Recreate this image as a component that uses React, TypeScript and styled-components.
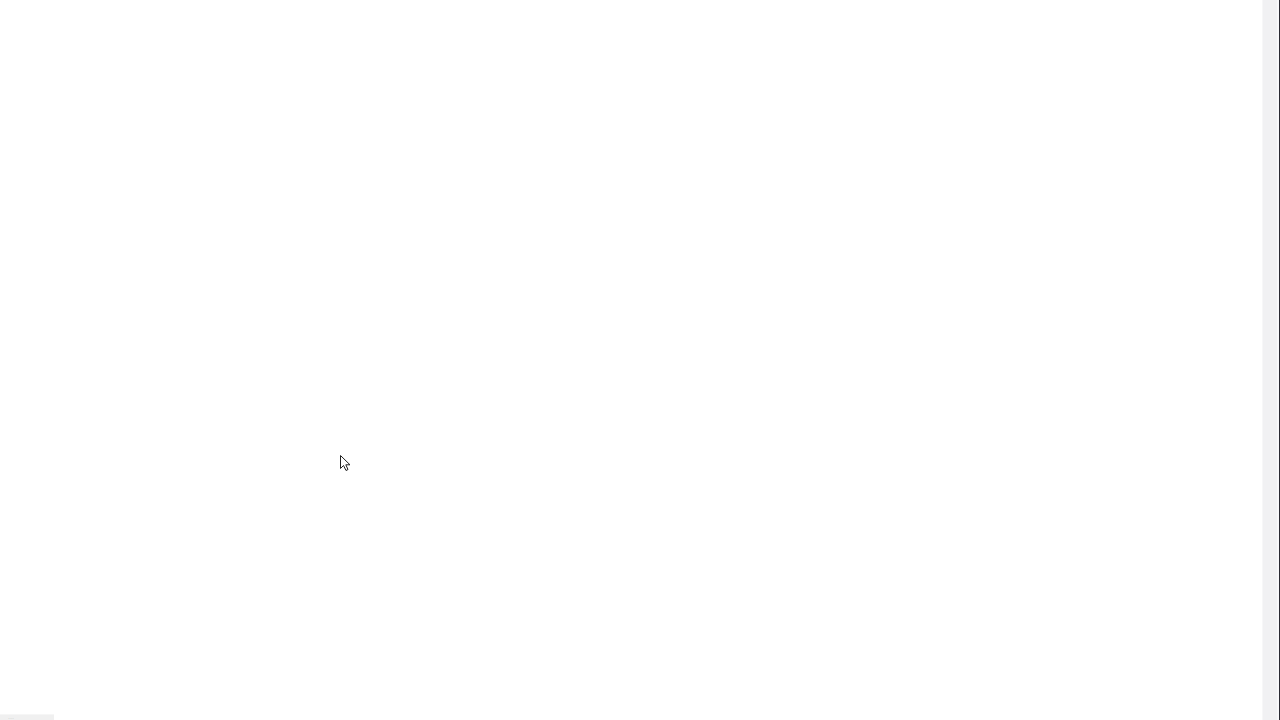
import React from "react";
import styled, { createGlobalStyle } from "styled-components";

const Global = createGlobalStyle`
  html, body { margin: 0; padding: 0; height: 100%; background: #ffffff; }
  #root { height: 100%; }
  body { font-family: "Liberation Sans", Arial, sans-serif; overflow: hidden; }
`;

const Page = styled.div`
  display: flex;
  width: 1280px;
  height: 720px;
  position: relative;
  background: #ffffff;
`;

const Main = styled.main`
  flex: 1;
  display: flex;
  flex-direction: column;
  justify-content: flex-end;
`;

const StatusBar = styled.div`
  width: 54px;
  height: 6px;
  background: #f0f0f0;
  border-top: 1px solid #f6f6f6;
  display: flex;
  align-items: center;
  padding-left: 8px;
  box-sizing: border-box;
  overflow: hidden;
`;

const StatusText = styled.span`
  font-size: 6px;
  line-height: 6px;
  color: #d4d4d4;
`;

const ScrollTrack = styled.div`
  width: 18px;
  height: 100%;
  display: flex;
  flex-direction: row;
  margin-left: 2px;
`;

const TrackFill = styled.div`
  width: 14px;
  background: #f1f1f3;
  border-left: 1px solid #f7f7f8;
`;

const TrackHighlight = styled.div`
  width: 2px;
  background: #f8f8fa;
`;

const TrackEdge = styled.div`
  width: 1px;
  background: #2a2a33;
`;

const Cursor = styled.svg`
  position: absolute;
  left: 339px;
  top: 454px;
  width: 14px;
  height: 18px;
  pointer-events: none;
`;

export default function App() {
  return (
    <>
      <Global />
      <Page>
        <Main>
          <StatusBar>
            <StatusText>⋯</StatusText>
          </StatusBar>
        </Main>
        <ScrollTrack>
          <TrackFill />
          <TrackHighlight />
          <TrackEdge />
        </ScrollTrack>
        <Cursor viewBox="0 0 14 18">
          <path
            d="M1.5 1.5 L1.5 14.5 L4.5 11.5 L7 16.5 L9 15.5 L6.8 10.8 L11 10.8 Z"
            fill="#ffffff"
            stroke="#222222"
            strokeWidth="1"
            strokeLinejoin="round"
          />
        </Cursor>
      </Page>
    </>
  );
}
